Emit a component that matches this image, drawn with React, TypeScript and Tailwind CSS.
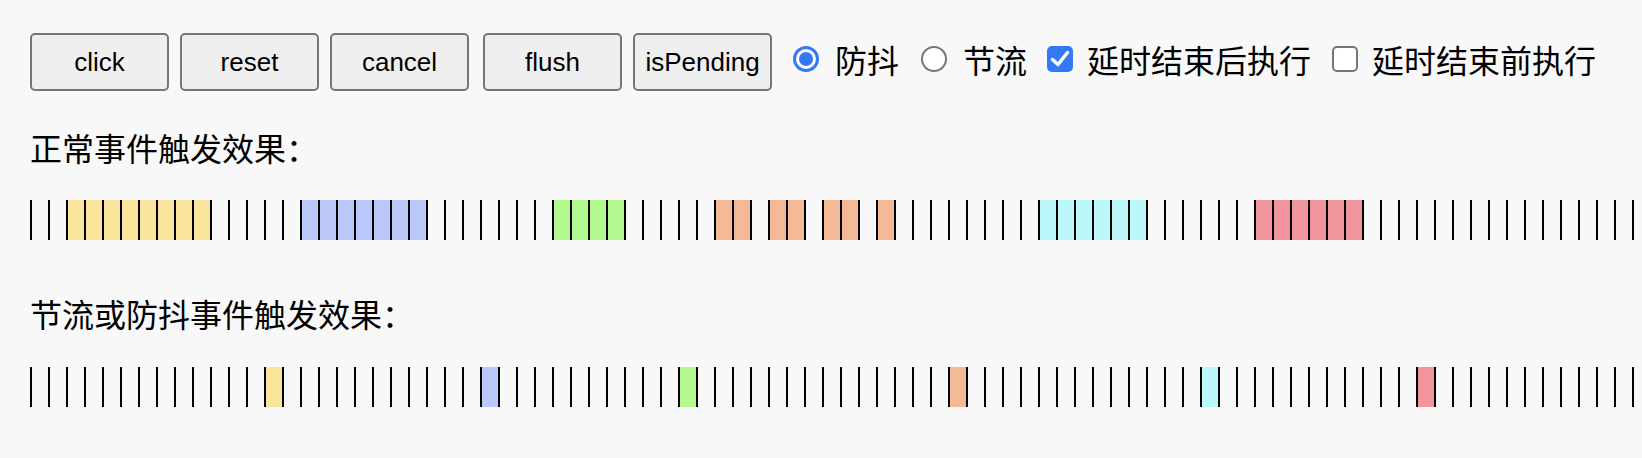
import React from "react";

const C: Record<string, string> = {
  y: "bg-[#f9e59b]",
  b: "bg-[#bbc7f6]",
  g: "bg-[#b4f98f]",
  o: "bg-[#f4b995]",
  c: "bg-[#bcf8f9]",
  r: "bg-[#f1959d]",
};

const row1: Record<number, string> = {};
const fill = (m: Record<number, string>, from: number, to: number, k: string) => {
  for (let i = from; i <= to; i++) m[i] = k;
};
fill(row1, 2, 9, "y");
fill(row1, 15, 21, "b");
fill(row1, 29, 32, "g");
fill(row1, 38, 39, "o");
fill(row1, 41, 42, "o");
fill(row1, 44, 45, "o");
fill(row1, 47, 47, "o");
fill(row1, 56, 61, "c");
fill(row1, 68, 73, "r");

const row2: Record<number, string> = { 13: "y", 25: "b", 36: "g", 51: "o", 65: "c", 77: "r" };

const N = 100;

function Bars({ map }: { map: Record<number, string> }) {
  return (
    <div className="flex h-[40px] w-max">
      {Array.from({ length: N }).map((_, i) => (
        <div
          key={i}
          className={`h-[40px] w-[18px] shrink-0 border-l-2 border-black ${map[i] ? C[map[i]] : ""}`}
        />
      ))}
    </div>
  );
}

function Btn({ label, className = "" }: { label: string; className?: string }) {
  return (
    <button
      className={`h-[58px] w-[139px] shrink-0 rounded-[5px] border-2 border-[#767676] bg-[#efefef] text-[26px] text-black ${className}`}
      style={{ fontFamily: '"Liberation Sans", Arial, sans-serif' }}
    >
      {label}
    </button>
  );
}

function RadioOn({ className = "" }: { className?: string }) {
  return (
    <div className={`flex h-[26px] w-[26px] shrink-0 items-center justify-center rounded-full border-[3px] border-[#3478f6] bg-white ${className}`}>
      <div className="h-[14px] w-[14px] rounded-full bg-[#3478f6]" />
    </div>
  );
}

function RadioOff({ className = "" }: { className?: string }) {
  return <div className={`block h-[26px] w-[26px] shrink-0 rounded-full border-2 border-[#767676] bg-white ${className}`} />;
}

function CheckOn({ className = "" }: { className?: string }) {
  return (
    <div className={`flex h-[26px] w-[26px] shrink-0 items-center justify-center rounded-[5px] bg-[#3478f6] ${className}`}>
      <svg width="26" height="26" viewBox="0 0 26 26">
        <path d="M5.5 13.5 L11 18.5 L20.5 6.5" fill="none" stroke="white" strokeWidth="3.5" strokeLinecap="round" strokeLinejoin="round" />
      </svg>
    </div>
  );
}

function CheckOff({ className = "" }: { className?: string }) {
  return <div className={`block h-[26px] w-[26px] shrink-0 rounded-[5px] border-2 border-[#767676] bg-white ${className}`} />;
}

const cjk = { fontFamily: '"Noto Sans CJK SC", "Noto Sans", sans-serif' };

export default function App() {
  return (
    <div className="min-h-screen w-full overflow-hidden bg-[#f8f8f8] pl-[30px] pt-[33px] text-black" style={cjk}>
      <div className="flex h-[58px] items-center">
        <Btn label="click" />
        <Btn label="reset" className="ml-[11px]" />
        <Btn label="cancel" className="ml-[11px]" />
        <Btn label="flush" className="ml-[14px]" />
        <Btn label="isPending" className="ml-[11px]" />
        <div className="mb-[6px] flex items-center text-[32px] leading-[32px]">
          <RadioOn className="ml-[21px]" />
          <div className="ml-[16px] whitespace-nowrap">防抖</div>
          <RadioOff className="ml-[22px]" />
          <div className="ml-[16px] whitespace-nowrap">节流</div>
          <CheckOn className="ml-[20px]" />
          <div className="ml-[14px] whitespace-nowrap">延时结束后执行</div>
          <CheckOff className="ml-[21px]" />
          <div className="ml-[14px] whitespace-nowrap">延时结束前执行</div>
        </div>
      </div>
      <div className="mt-[36px] h-[40px] whitespace-nowrap text-[32px] leading-[40px]">正常事件触发效果：</div>
      <div className="mt-[33px]">
        <Bars map={row1} />
      </div>
      <div className="mt-[53px] h-[40px] whitespace-nowrap text-[32px] leading-[40px]">节流或防抖事件触发效果：</div>
      <div className="mt-[34px]">
        <Bars map={row2} />
      </div>
    </div>
  );
}
